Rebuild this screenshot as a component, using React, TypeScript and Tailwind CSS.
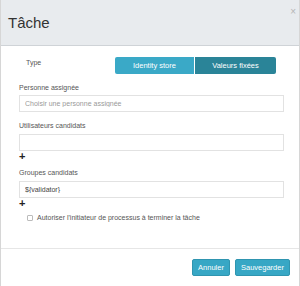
import { useState } from 'react';

const labelCls = "block text-[7px] leading-[9px] text-[#555]";
const inputCls =
  "block w-[265px] h-[17px] border border-[#e2e2e2] bg-white px-[5px] text-[7px] text-[#444] placeholder:text-[#999] outline-none";

function Plus() {
  return <div className="ml-[18px] text-[11px] leading-[8px] font-bold text-[#222]">+</div>;
}

export default function App() {
  const [mode, setMode] = useState<'identity' | 'fixed'>('fixed');

  return (
    <div
      className="w-[300px] h-[286px] bg-white border-x border-[#d6d6d6] flex flex-col overflow-hidden"
      style={{ fontFamily: '"Liberation Sans", Arial, sans-serif' }}
    >
      {/* Header */}
      <div className="relative h-[46px] shrink-0 bg-[#e8ebee] border-b border-[#cfd3d7]">
        <h1 className="pl-[7px] pt-[14px] text-[15px] leading-[18px] text-[#333]">Tâche</h1>
        <span className="absolute right-[3px] top-[7px] text-[10px] leading-[10px] text-[#b5b5b5]">×</span>
      </div>

      {/* Body */}
      <div className="flex-1 pt-[11px]">
        <div className="flex h-[17px]">
          <span className="ml-[25px] mt-[1px] w-[89px] text-[7px] leading-[9px] text-[#555]">Type</span>
          <div className="flex">
            <button
              onClick={() => setMode('identity')}
              className={`w-[79px] h-[17px] rounded-l-[2px] text-[7.5px] text-white ${mode === 'identity' ? 'bg-[#2a8498]' : 'bg-[#3aa9c7]'}`}
            >
              Identity store
            </button>
            <button
              onClick={() => setMode('fixed')}
              className={`w-[81px] h-[17px] ml-px rounded-r-[2px] text-[7.5px] text-white ${mode === 'fixed' ? 'bg-[#2a8498]' : 'bg-[#3aa9c7]'}`}
            >
              Valeurs fixées
            </button>
          </div>
        </div>

        <div className="pl-[18px] mt-[9px]">
          <label className={labelCls}>Personne assignée</label>
          <input className={`${inputCls} mt-[3px]`} placeholder="Choisir une personne assignée" />
        </div>

        <div className="pl-[18px] mt-[9px]">
          <label className={labelCls}>Utilisateurs candidats</label>
          <input className={`${inputCls} mt-[4px]`} />
        </div>
        <div className="mt-[1px]"><Plus /></div>

        <div className="pl-[18px] mt-[8px]">
          <label className={labelCls}>Groupes candidats</label>
          <input className={`${inputCls} mt-[4px]`} defaultValue="${validator}" />
        </div>
        <div className="mt-[1px]"><Plus /></div>

        <label className="flex items-center ml-[26px] mt-[6px] gap-[4px]">
          <span className="w-[6px] h-[6px] rounded-[1px] border border-[#bbb] bg-white" />
          <span className="text-[7px] leading-[9px] text-[#555]">Autoriser l'initiateur de processus à terminer la tâche</span>
        </label>
      </div>

      {/* Footer */}
      <div className="h-[38px] shrink-0 border-t border-[#e6e6e6] flex justify-end items-start pt-[10px] pr-[9px] gap-[5px]">
        <button className="h-[17px] w-[38px] rounded-[2px] bg-[#37a7c5] border border-[#2f95b0] text-[7.5px] text-white">Annuler</button>
        <button className="h-[17px] w-[55px] rounded-[2px] bg-[#37a7c5] border border-[#2f95b0] text-[7.5px] text-white">Sauvegarder</button>
      </div>
    </div>
  );
}
